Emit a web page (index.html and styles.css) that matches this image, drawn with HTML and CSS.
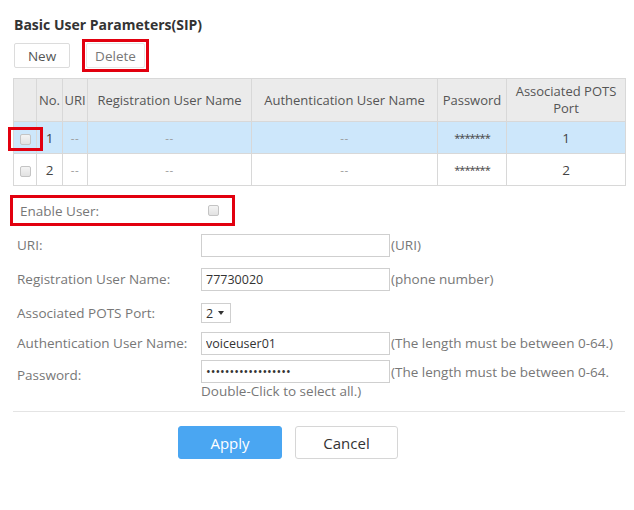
FILE: index.html
```html
<!DOCTYPE html>
<html>
<head>
<meta charset="utf-8">
<link rel="stylesheet" href="styles.css">
</head>
<body>
<div class="page">
  <h1 class="title">Basic User Parameters(SIP)</h1>
  <div class="toolbar">
    <button class="tbtn">New</button>
    <button class="tbtn marked">Delete</button>
  </div>
  <table class="grid">
    <colgroup>
      <col style="width:23px"><col style="width:26px"><col style="width:25px"><col style="width:164px"><col style="width:186px"><col style="width:69px"><col style="width:119px">
    </colgroup>
    <thead>
      <tr>
        <th></th><th class="nol">No.</th><th class="nol">URI</th><th>Registration User Name</th><th>Authentication User Name</th><th>Password</th><th>Associated POTS Port</th>
      </tr>
    </thead>
    <tbody>
      <tr class="sel">
        <td><span class="cbwrap marked-cb"><input type="checkbox" class="cb"></span></td><td class="num">1</td><td class="dash">--</td><td class="dash">--</td><td class="dash">--</td><td class="pw">*******</td><td class="num">1</td>
      </tr>
      <tr>
        <td><span class="cbwrap"><input type="checkbox" class="cb"></span></td><td class="num">2</td><td class="dash">--</td><td class="dash">--</td><td class="dash">--</td><td class="pw">*******</td><td class="num">2</td>
      </tr>
    </tbody>
  </table>

  <div class="form">
    <div class="row r-enable">
      <label class="lbl">Enable User:</label>
      <input type="checkbox" class="cb enable-cb">
    </div>
    <div class="row r-uri">
      <label class="lbl">URI:</label>
      <input type="text" class="txt" value="">
      <span class="hint">(URI)</span>
    </div>
    <div class="row r-reg">
      <label class="lbl">Registration User Name:</label>
      <input type="text" class="txt" value="77730020">
      <span class="hint">(phone number)</span>
    </div>
    <div class="row r-pots">
      <label class="lbl">Associated POTS Port:</label>
      <span class="selwrap"><select class="sel-box"><option>1</option><option selected>2</option></select></span>
    </div>
    <div class="row r-auth">
      <label class="lbl">Authentication User Name:</label>
      <input type="text" class="txt" value="voiceuser01">
      <span class="hint">(The length must be between 0-64.)</span>
    </div>
    <div class="row r-pass">
      <label class="lbl lbl-pass">Password:</label>
      <div class="passbox">
        <div class="passline">
          <input type="password" class="txt" value="abcdefghijklmnopqr">
          <span class="hint">(The length must be between 0-64.</span>
        </div>
        <div class="hint hint2">Double-Click to select all.)</div>
      </div>
    </div>
  </div>

  <div class="actions">
    <button class="abtn apply">Apply</button>
    <button class="abtn cancel">Cancel</button>
  </div>
</div>
</body>
</html>
```
FILE: styles.css
```css
* { box-sizing: border-box; }
html, body { margin: 0; padding: 0; background: #fff; }
body { font-family: "Open Sans", "Noto Sans", sans-serif; color: #555; }

.page { padding: 16px 9px 0 13px; width: 634px; }

.title {
  margin: 0 0 0 1px;
  font-size: 14px;
  font-weight: 700;
  color: #333;
  line-height: 18px;
  letter-spacing: 0;
}

.toolbar { display: flex; gap: 16px; margin-top: 9px; padding-left: 1px; }
.tbtn {
  height: 25px;
  padding: 0;
  font: 13.5px "Open Sans", sans-serif;
  color: #555;
  background: #fff;
  border: 1px solid #dcdcdc;
  border-radius: 2px;
}
.tbtn:first-child { width: 56px; }
.tbtn.marked { position: relative; width: 59px; color: #777; border-color: #e6e6e6; }
.tbtn.marked::after {
  content: "";
  position: absolute;
  left: -5px; right: -5px; top: -5px; bottom: -5px;
  border: 3px solid #e2000f;
}

.grid {
  margin-top: 10px;
  width: 612px;
  border-collapse: collapse;
  table-layout: fixed;
  font-size: 13px;
}
.grid th, .grid td {
  border: 1px solid #d8d8d8;
  text-align: center;
  padding: 0;
  color: #555;
}
.grid th {
  background: #ebebeb;
  font-weight: 400;
  height: 43px;
  line-height: 17px;
  padding: 0 2px;
}
.grid th.nol { padding: 0; }
.grid td { height: 32px; }
.grid tr.sel td { background: #cde7fb; }
.grid td.num { font-size: 13.5px; color: #444; }
.grid td.dash { color: #999; font-size: 11.5px; letter-spacing: 0.5px; }
.grid td.pw { color: #444; font-size: 11px; letter-spacing: -1px; }

.cbwrap { position: relative; display: inline-block; vertical-align: middle; line-height: 0; }
.marked-cb::after {
  content: "";
  position: absolute;
  left: -12px; right: -12px; top: -7px; bottom: -6px;
  border: 3px solid #e2000f;
}

.cb {
  -webkit-appearance: none;
  appearance: none;
  width: 11px;
  height: 11px;
  margin: 0;
  border: 1px solid #c4c4c4;
  border-radius: 2px;
  background: linear-gradient(#f4f4f4, #e2e2e2);
  vertical-align: middle;
}

.form { margin-top: 9px; padding-left: 4px; font-size: 13.5px; color: #777; }
.row { display: flex; align-items: center; }
.lbl { width: 184px; flex: none; }
.r-enable {
  height: 31px;
  width: 225px;
  margin-left: -7px;
  padding-left: 7px;
  border: 3px solid #e2000f;
}
.enable-cb { margin-left: 4px; }
.r-uri { height: 28px; margin-top: 5px; }
.r-reg { height: 28px; margin-top: 6px; }
.r-pots { height: 28px; margin-top: 6px; }
.r-auth { height: 26px; margin-top: 3px; }
.r-pass { align-items: flex-start; margin-top: 4px; }
.lbl-pass { padding-top: 6px; }

.txt {
  width: 189px;
  height: 23px;
  border: 1px solid #cfcfcf;
  padding: 0 4px;
  font: 12.5px "Open Sans", sans-serif;
  color: #333;
  background: #fff;
}
.hint { color: #777; font-size: 13.5px; padding-left: 1px; }
.passline { display: flex; align-items: center; }
.hint2 { padding-left: 0; line-height: 14px; margin-top: 1px; }

.selwrap { position: relative; display: inline-block; }
.selwrap::after {
  content: "";
  position: absolute;
  right: 7px; top: 8px;
  border-left: 3px solid transparent;
  border-right: 3px solid transparent;
  border-top: 4px solid #333;
}
.sel-box {
  -webkit-appearance: none;
  appearance: none;
  width: 30px;
  height: 20px;
  border: 1px solid #cfcfcf;
  background: #fff;
  padding: 0 0 0 4px;
  font: 12.5px "Open Sans", sans-serif;
  color: #333;
  border-radius: 0;
}

.actions {
  margin-top: 13px;
  border-top: 1px solid #e4e4e4;
  width: 612px;
  padding: 14px 0 0 165px;
  display: flex;
  gap: 13px;
}
.abtn {
  width: 104px;
  height: 33px;
  border-radius: 3px;
  font: 15px "Open Sans", sans-serif;
}
.apply { background: #4aa6f2; color: #fff; border: 1px solid #4aa6f2; }
.cancel { width: 103px; background: #fff; color: #333; border: 1px solid #d6d6d6; }
```
